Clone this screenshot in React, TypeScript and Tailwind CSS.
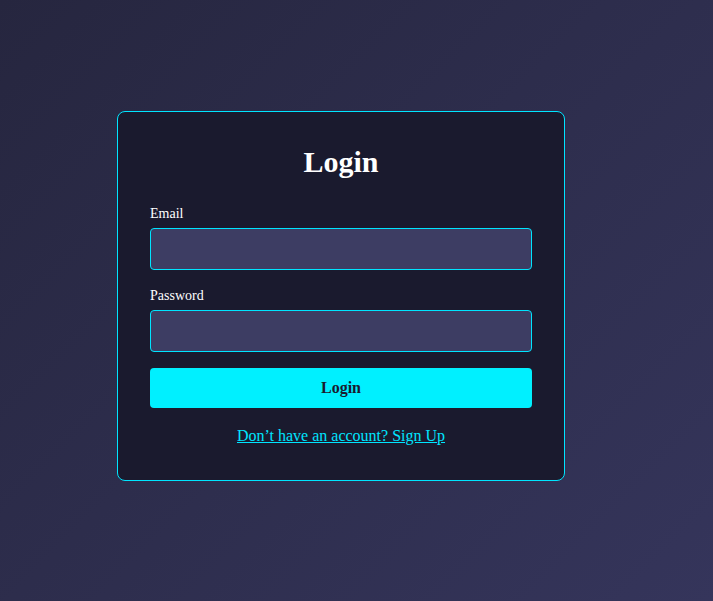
export default function App() {
  return (
    <div
      className="min-h-[601px] w-full bg-[linear-gradient(135deg,#26263f,#35355b)] pt-[111px] pl-[117px]"
      style={{ fontFamily: '"Liberation Serif", "Times New Roman", serif' }}
    >
      <div className="w-[448px] h-[370px] rounded-[8px] border border-[#00e5ff] bg-[#1a1a2e] px-8 pt-8 flex flex-col">
        <h2 className="text-center text-[30px] leading-[36px] font-bold text-white mb-[26px]">Login</h2>
        <label className="text-[14px] leading-[16px] text-white mb-[6px]">Email</label>
        <div className="h-[42px] rounded-[4px] border border-[#00e5ff] bg-[#3d3d63] mb-[18px]" />
        <label className="text-[14px] leading-[16px] text-white mb-[6px]">Password</label>
        <div className="h-[42px] rounded-[4px] border border-[#00e5ff] bg-[#3d3d63] mb-[16px]" />
        <button className="h-[40px] rounded-[4px] bg-[#00f0ff] text-[#1a1a2e] text-[16px] font-bold">
          Login
        </button>
        <div className="mt-[16px] text-center">
          <a href="#" className="text-[16px] text-[#00e5ff] underline">
            Don’t have an account? Sign Up
          </a>
        </div>
      </div>
    </div>
  );
}
